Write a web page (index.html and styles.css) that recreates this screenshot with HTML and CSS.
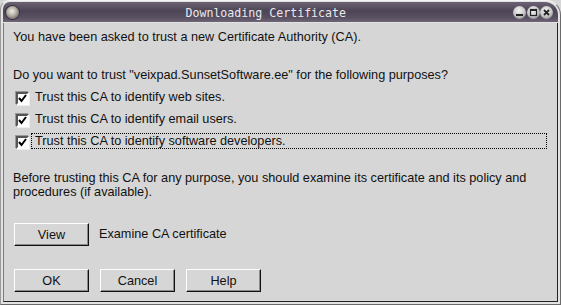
FILE: index.html
```html
<!DOCTYPE html>
<html lang="en">

<head>
    <meta charset="UTF-8">
    <link rel="stylesheet" href="styles.css">
    <title>Downloading Certificate</title>
</head>

<body>

    <div class="window">
        <div class="titlebar">
            <span class="menuBall"></span>
            <span class="title">Downloading Certificate</span>
            <div class="winBtns">
                <span class="winBtn">
                    <svg width="13" height="13" viewBox="0 0 13 13"><rect x="3" y="8" width="7" height="2" fill="#222"/></svg>
                </span>
                <span class="winBtn">
                    <svg width="13" height="13" viewBox="0 0 13 13"><rect x="3.5" y="3.5" width="6" height="6" fill="none" stroke="#222" stroke-width="1.2"/><rect x="3" y="3" width="7" height="2" fill="#222"/></svg>
                </span>
                <span class="winBtn">
                    <svg width="13" height="13" viewBox="0 0 13 13"><path d="M4 4 L9 9 M9 4 L4 9" stroke="#222" stroke-width="1.8"/></svg>
                </span>
            </div>
        </div>

        <div class="client">
            <p class="intro">You have been asked to trust a new Certificate Authority (CA).</p>
            <p class="question">Do you want to trust "veixpad.SunsetSoftware.ee" for the following purposes?</p>

            <ul class="purposes">
                <li class="purpose">
                    <span class="checkBox"><svg width="9" height="9" viewBox="0 0 9 9"><path d="M1 4 L3.5 7 L8 1" fill="none" stroke="#000" stroke-width="2"/></svg></span>
                    <span class="label">Trust this CA to identify web sites.</span>
                </li>
                <li class="purpose">
                    <span class="checkBox"><svg width="9" height="9" viewBox="0 0 9 9"><path d="M1 4 L3.5 7 L8 1" fill="none" stroke="#000" stroke-width="2"/></svg></span>
                    <span class="label">Trust this CA to identify email users.</span>
                </li>
                <li class="purpose">
                    <span class="checkBox"><svg width="9" height="9" viewBox="0 0 9 9"><path d="M1 4 L3.5 7 L8 1" fill="none" stroke="#000" stroke-width="2"/></svg></span>
                    <span class="label focused">Trust this CA to identify software developers.</span>
                </li>
            </ul>

            <p class="advice">Before trusting this CA for any purpose, you should examine its certificate and its policy and<br>procedures (if available).</p>

            <div class="viewRow">
                <button class="btn">View</button>
                <span class="viewText">Examine CA certificate</span>
            </div>

            <div class="actions">
                <button class="btn">OK</button>
                <button class="btn">Cancel</button>
                <button class="btn">Help</button>
            </div>
        </div>
    </div>

</body>

</html>
```

FILE: styles.css
```css
* {
    margin: 0;
    padding: 0;
    list-style: none;
    box-sizing: border-box;
}

body {
    width: 561px;
    height: 305px;
    overflow: hidden;
    background: #d6d6d6;
    font-family: "Liberation Sans", Arial, sans-serif;
    font-size: 12.7px;
    color: #111;
}

.window {
    width: 561px;
    height: 305px;
    display: flex;
    flex-direction: column;
    background: #e2e2e2;
    border: 1px solid #6a6a6a;
    border-top-color: #f4f4f4;
    border-left-color: #9a9a9a;
    border-radius: 9px 15px 0 0;
    padding: 1px 2px 2px 2px;
    overflow: hidden;
}

.titlebar {
    height: 20px;
    flex: none;
    display: flex;
    align-items: center;
    padding: 0 4px 0 3px;
    background: linear-gradient(#6b6273, #4d4455 45%, #5a5162 80%, #6e6676);
    border-radius: 7px 13px 0 0;
}

.menuBall {
    width: 13px;
    height: 13px;
    flex: none;
    border-radius: 50%;
    background: radial-gradient(circle at 45% 40%, #f0ece4 0, #b8b2aa 40%, #5a5650 90%);
    box-shadow: 0 0 0 1px #3a3440;
}

.title {
    flex: 1;
    text-align: center;
    font-family: "DejaVu Sans Mono", "Liberation Mono", monospace;
    font-size: 11.6px;
    line-height: 20px;
    padding-top: 1px;
    color: #ebe8ee;
}

.winBtns {
    display: flex;
    margin-right: 1px;
}

.winBtn {
    width: 13px;
    height: 13px;
    border-radius: 50%;
    margin-left: 0.5px;
    background: radial-gradient(circle at 45% 35%, #f4f4f4 0, #c8c8c8 50%, #7a7a7a 95%);
    display: flex;
}

.client {
    flex: 1;
    margin-top: 1px;
    background: #d6d6d6;
    border-left: 1px solid #7a7a7a;
    border-right: 1px solid #222;
    border-bottom: 1px solid #222;
    padding: 7px 10px 0 9px;
}

.intro {
    line-height: 14px;
}

.question {
    line-height: 14px;
    margin-top: 24px;
}

.purposes {
    margin-top: 7px;
    display: flex;
    flex-direction: column;
    gap: 6px;
}

.purpose {
    display: flex;
    height: 16px;
    padding-left: 3px;
}

.checkBox {
    width: 13px;
    height: 13px;
    margin-top: 3px;
    flex: none;
    display: flex;
    align-items: center;
    justify-content: center;
    background: #fff;
    border: 2px solid;
    border-color: #555 #fff #fff #555;
    box-shadow: -1px -1px 0 #999, 1px 1px 0 #eee;
}

.label {
    margin-left: 2px;
    padding: 0 3px;
    line-height: 14px;
    border: 1px solid transparent;
}

.label.focused {
    flex: 1;
    border: 1px dotted #000;
}

.advice {
    margin-top: 22px;
    line-height: 14px;
}

.viewRow {
    margin-top: 24px;
    display: flex;
    align-items: center;
    gap: 10px;
    padding-left: 1px;
}

.btn {
    width: 75px;
    height: 23px;
    font-family: "Liberation Sans", Arial, sans-serif;
    font-size: 12.7px;
    line-height: 14px;
    color: #111;
    background: #d6d6d6;
    border: 1px solid;
    border-color: #fff #111 #111 #fff;
    box-shadow: inset -1px -1px 0 #8a8a8a;
}

.viewText {
    padding-bottom: 2px;
}

.actions {
    margin-top: 23px;
    display: flex;
    gap: 11px;
    padding-left: 1px;
}
```
